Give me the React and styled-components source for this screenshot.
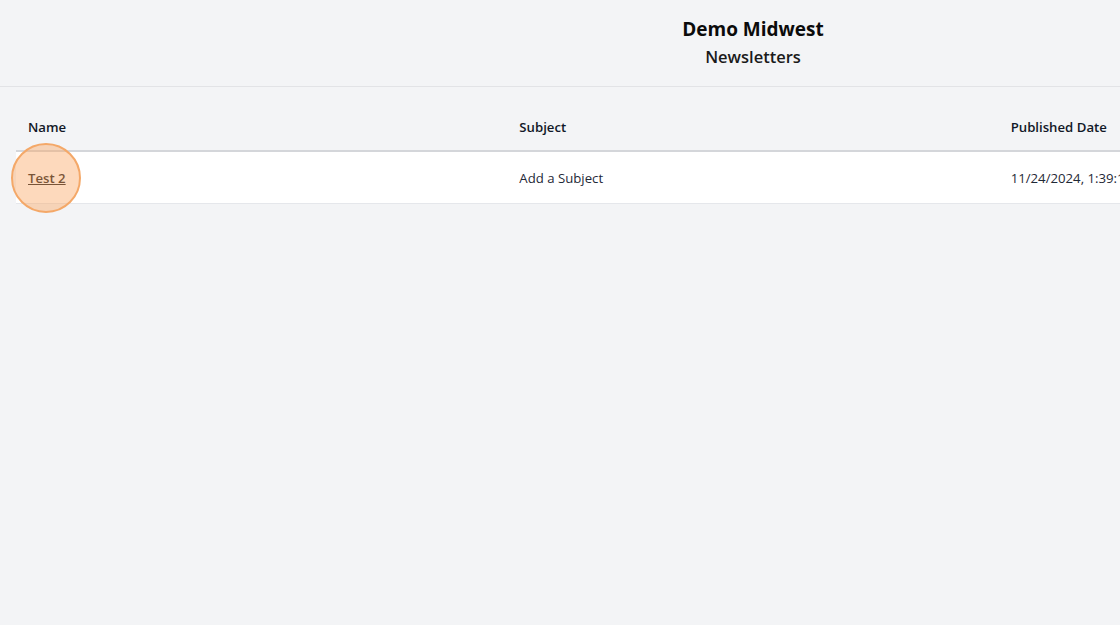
import React from "react";
import styled, { createGlobalStyle } from "styled-components";

const Global = createGlobalStyle`
  html, body { margin: 0; padding: 0; background: #f3f4f6; }
  body { font-family: "Open Sans", "Noto Sans", sans-serif; color: #111827; }
`;

const Page = styled.div`
  width: max-content;
  min-width: 100%;
  min-height: 625px;
  background: #f3f4f6;
`;

const Header = styled.header`
  height: 86px;
  border-bottom: 1px solid #e2e3e6;
  display: flex;
  flex-direction: column;
  align-items: center;
  justify-content: center;
`;

const Title = styled.h1`
  margin: 0;
  font-size: 19px;
  line-height: 27px;
  font-weight: 700;
  color: #0b0b0b;
`;

const Subtitle = styled.h2`
  margin: 0;
  font-size: 16.5px;
  line-height: 27px;
  font-weight: 600;
  color: #1a1a1a;
`;

const Content = styled.main`
  padding: 16px 16px 0;
`;

const Table = styled.table`
  width: 1474px;
  table-layout: fixed;
  border-collapse: collapse;
  font-size: 13.2px;
`;

const HeadCell = styled.th`
  text-align: left;
  font-weight: 600;
  height: 47px;
  padding: 0 12px;
  vertical-align: middle;
  color: #111827;
  border-bottom: 2px solid #d4d6da;
`;

const Row = styled.tr`
  background: #ffffff;
  border-bottom: 1px solid #e5e7eb;
`;

const Cell = styled.td`
  height: 51px;
  padding: 0 12px;
  vertical-align: middle;
  color: #1f2937;
  white-space: nowrap;
  overflow: ${(p) => (p.$clip ? "hidden" : "visible")};
`;

const NameLink = styled.a`
  position: relative;
  color: #1a1a1a;
  text-decoration: underline;
  font-weight: 600;
`;

const Highlight = styled.span`
  position: absolute;
  left: 50%;
  top: 50%;
  width: 66px;
  height: 66px;
  margin-left: -36px;
  margin-top: -35px;
  border-radius: 50%;
  border: 2px solid #f4a868;
  background: rgba(250, 165, 95, 0.42);
  pointer-events: none;
`;

export default function App() {
  return (
    <Page>
      <Global />
      <Header>
        <Title>Demo Midwest</Title>
        <Subtitle>Newsletters</Subtitle>
      </Header>
      <Content>
        <Table>
          <thead>
            <tr>
              <HeadCell>Name</HeadCell>
              <HeadCell>Subject</HeadCell>
              <HeadCell>Published Date</HeadCell>
            </tr>
          </thead>
          <tbody>
            <Row>
              <Cell>
                <NameLink href="#">
                  Test 2
                  <Highlight />
                </NameLink>
              </Cell>
              <Cell $clip>Add a Subject</Cell>
              <Cell $clip>11/24/2024, 1:39:15 PM</Cell>
            </Row>
          </tbody>
        </Table>
      </Content>
    </Page>
  );
}
